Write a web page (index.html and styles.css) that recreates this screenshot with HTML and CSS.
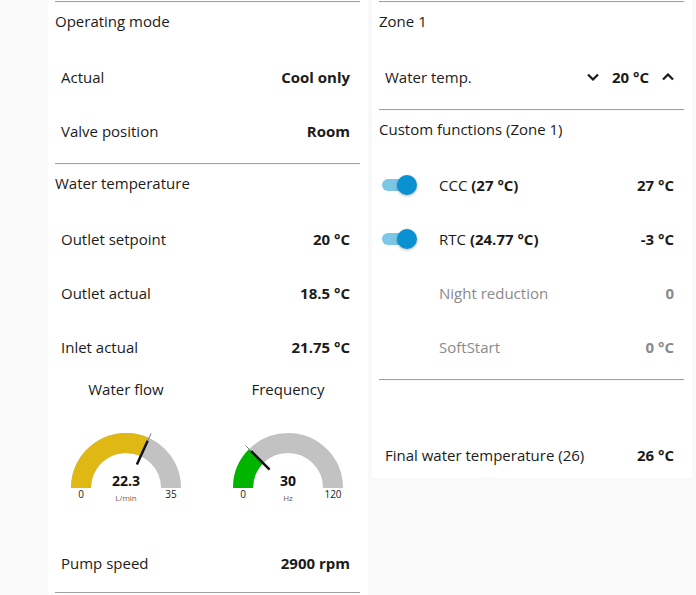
FILE: index.html
```html
<!DOCTYPE html>
<html lang="en">

<head>
    <meta charset="UTF-8">
    <meta name="viewport" content="width=device-width, initial-scale=1.0">
    <title>Heat pump - water</title>
    <link rel="stylesheet" href="styles.css">
</head>

<body>
    <div class="page">
        <!-- left column -->
        <div class="card card-left">
            <section class="group">
                <h2 class="group-title">Operating mode</h2>
                <div class="row"><span class="label">Actual</span><span class="value">Cool only</span></div>
                <div class="row"><span class="label">Valve position</span><span class="value">Room</span></div>
            </section>

            <section class="group group-tight">
                <h2 class="group-title">Water temperature</h2>
                <div class="row"><span class="label">Outlet setpoint</span><span class="value">20 °C</span></div>
                <div class="row"><span class="label">Outlet actual</span><span class="value">18.5 °C</span></div>
                <div class="row"><span class="label">Inlet actual</span><span class="value">21.75 °C</span></div>

                <!-- gauges -->
                <div class="gauges">
                    <div class="gauge">
                        <div class="gauge-title">Water flow</div>
                        <svg class="gauge-svg" width="130" height="80" viewBox="0 0 130 80">
                            <path d="M20 60 A45 45 0 0 1 110 60" fill="none" stroke="#c2c2c2" stroke-width="20" />
                            <path d="M20 60 A45 45 0 0 1 83.8 19.1" fill="none" stroke="#e0b814" stroke-width="20" />
                            <line x1="86.7" y1="12.8" x2="90.1" y2="5.5" stroke="#777" stroke-width="1" />
                            <line x1="75.9" y1="36.4" x2="86.7" y2="12.8" stroke="#111" stroke-width="2.5" />
                            <text x="65" y="58" text-anchor="middle" class="g-val">22.3</text>
                            <text x="20" y="70" text-anchor="middle" class="g-lim">0</text>
                            <text x="110" y="70" text-anchor="middle" class="g-lim">35</text>
                            <text x="65" y="73" text-anchor="middle" class="g-unit">L/min</text>
                        </svg>
                    </div>
                    <div class="gauge">
                        <div class="gauge-title">Frequency</div>
                        <svg class="gauge-svg" width="130" height="80" viewBox="0 0 130 80">
                            <path d="M20 60 A45 45 0 0 1 110 60" fill="none" stroke="#c2c2c2" stroke-width="20" />
                            <path d="M20 60 A45 45 0 0 1 33.2 28.2" fill="none" stroke="#00b400" stroke-width="20" />
                            <line x1="28.2" y1="23.2" x2="22.6" y2="17.6" stroke="#777" stroke-width="1" />
                            <line x1="46.6" y1="41.6" x2="28.2" y2="23.2" stroke="#111" stroke-width="2.5" />
                            <text x="65" y="58" text-anchor="middle" class="g-val">30</text>
                            <text x="20" y="70" text-anchor="middle" class="g-lim">0</text>
                            <text x="110" y="70" text-anchor="middle" class="g-lim">120</text>
                            <text x="65" y="73" text-anchor="middle" class="g-unit">Hz</text>
                        </svg>
                    </div>
                </div>

                <div class="row"><span class="label">Pump speed</span><span class="value">2900 rpm</span></div>
            </section>

            <section class="group group-end"></section>
        </div>

        <!-- right column -->
        <div class="card card-right">
            <section class="group">
                <h2 class="group-title">Zone 1</h2>
                <div class="row">
                    <span class="label">Water temp.</span>
                    <span class="stepper">
                        <svg class="chev" width="12" height="8" viewBox="0 0 12 8"><path d="M1 1.5 L6 6.5 L11 1.5" /></svg>
                        <span class="value">20 °C</span>
                        <svg class="chev" width="12" height="8" viewBox="0 0 12 8"><path d="M1 6.5 L6 1.5 L11 6.5" /></svg>
                    </span>
                </div>
            </section>

            <section class="group">
                <h2 class="group-title">Custom functions (Zone 1)</h2>
                <div class="row">
                    <span class="toggle on"><span class="knob"></span></span>
                    <span class="label grow">CCC <b>(27 °C)</b></span>
                    <span class="value">27 °C</span>
                </div>
                <div class="row">
                    <span class="toggle on"><span class="knob"></span></span>
                    <span class="label grow">RTC <b>(24.77 °C)</b></span>
                    <span class="value">-3 °C</span>
                </div>
                <div class="row muted">
                    <span class="toggle-space"></span>
                    <span class="label grow">Night reduction</span>
                    <span class="value">0</span>
                </div>
                <div class="row muted">
                    <span class="toggle-space"></span>
                    <span class="label grow">SoftStart</span>
                    <span class="value">0 °C</span>
                </div>
            </section>

            <section class="group">
                <h2 class="group-title"></h2>
                <div class="row"><span class="label">Final water temperature (26)</span><span class="value">26 °C</span></div>
            </section>
        </div>
    </div>
</body>

</html>
```

FILE: styles.css
```css
/* reset */
* {
    margin: 0;
    padding: 0;
    box-sizing: border-box;
}

body {
    background: #f9f9f9;
    font-family: "Open Sans", "Noto Sans", sans-serif;
    font-size: 15px;
    color: #1b1b1b;
}

.page {
    display: flex;
    align-items: flex-start;
    gap: 4px;
    padding-left: 48px;
}

/* cards */
.card {
    width: 320px;
    background: #fff;
    padding: 1px 8px 0 7px;
}

.card-left {
    height: 595px;
    overflow: hidden;
}

.card-right {
    height: 478px;
    overflow: hidden;
}

/* group = divider + title + rows */
.group {
    border-top: 1px solid #a39e9e;
    box-shadow: inset 0 1px 1px -1px rgba(0, 0, 0, .2);
    margin-bottom: 5px;
}

.group-tight {
    margin-bottom: 2px;
}

.group-end {
    margin-bottom: 0;
}

.group-title {
    height: 48px;
    padding-top: 9px;
    font-size: 15px;
    font-weight: 400;
    line-height: 20px;
}

.row {
    display: flex;
    align-items: center;
    justify-content: space-between;
    height: 54px;
    padding: 0 10px 0 6px;
}

.label.grow {
    flex: 1;
}

.label b,
.value {
    font-weight: 700;
}

.row.muted {
    color: #8a8a8a;
}

/* stepper with chevrons */
.stepper {
    display: flex;
    align-items: center;
    gap: 13px;
}

.chev {
    fill: none;
    stroke: #1b1b1b;
    stroke-width: 2.2;
}

/* toggles */
.toggle,
.toggle-space {
    position: relative;
    width: 35px;
    height: 20px;
    margin: 0 22px 0 -3px;
}

.toggle::before {
    content: "";
    position: absolute;
    left: 0;
    top: 4px;
    width: 32px;
    height: 12px;
    border-radius: 6px;
    background: #7cc6e6;
}

.toggle .knob {
    position: absolute;
    right: 0;
    top: 0;
    width: 20px;
    height: 20px;
    border-radius: 50%;
    background: #0a91d2;
    box-shadow: 0 1px 3px rgba(0, 0, 0, .3);
}

/* gauges */
.gauges {
    display: grid;
    grid-template-columns: 156px 156px;
    column-gap: 6px;
    margin-left: -7px;
    padding-top: 5px;
    margin-bottom: 28px;
}

.gauge {
    display: flex;
    flex-direction: column;
    align-items: center;
}

.gauge-title {
    line-height: 20px;
}

.gauge-svg {
    display: block;
    margin-top: 29px;
}

.g-val {
    font-family: "Open Sans", sans-serif;
    font-size: 14px;
    font-weight: 700;
    fill: #111;
}

.g-lim {
    font-family: "Open Sans", sans-serif;
    font-size: 10px;
    fill: #222;
}

.g-unit {
    font-family: "Open Sans", sans-serif;
    font-size: 8px;
    fill: #7a5a44;
}
```
